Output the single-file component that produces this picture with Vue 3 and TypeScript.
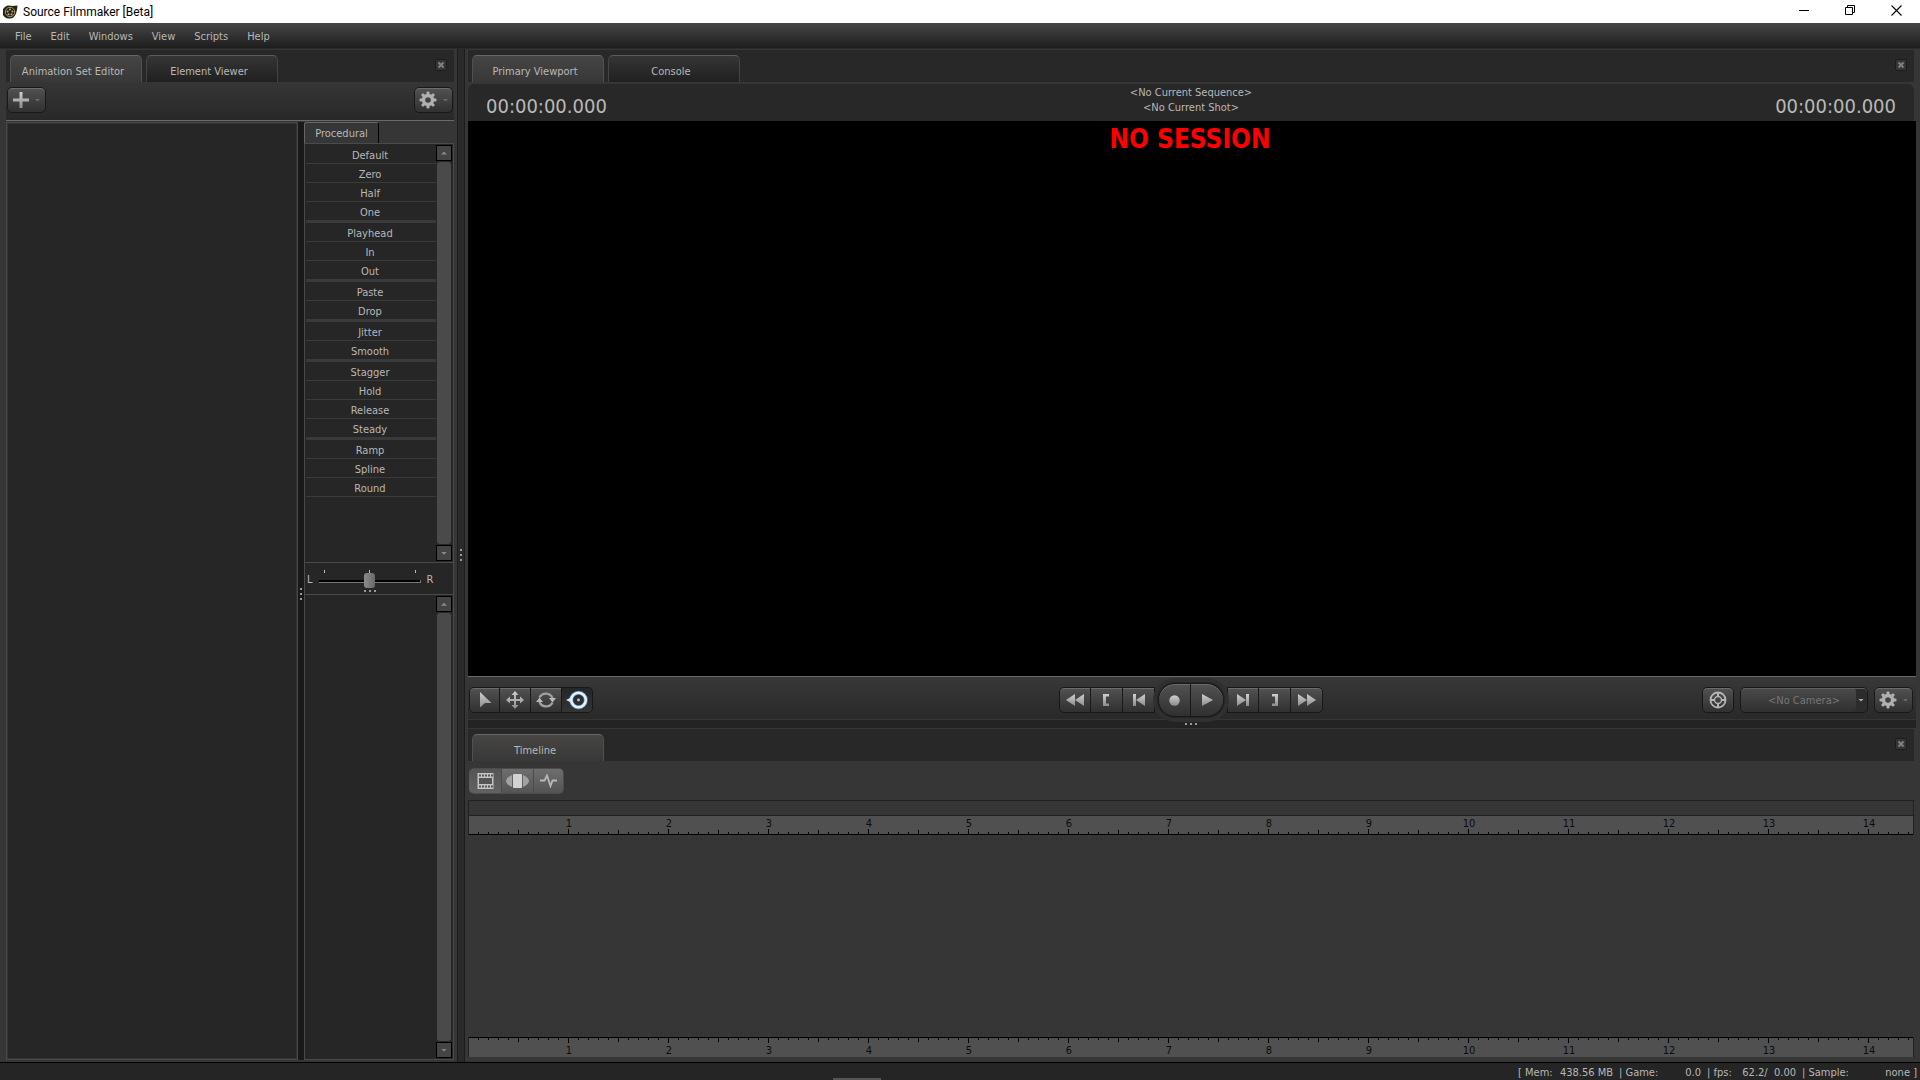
<script setup lang="ts">
import { ref } from 'vue'

const menus = ['File', 'Edit', 'Windows', 'View', 'Scripts', 'Help']
const presetGroups: string[][] = [
  ['Default', 'Zero', 'Half', 'One'],
  ['Playhead', 'In', 'Out'],
  ['Paste', 'Drop'],
  ['Jitter', 'Smooth'],
  ['Stagger', 'Hold', 'Release', 'Steady'],
  ['Ramp', 'Spline', 'Round'],
]
const stats = [
  { label: '[ Mem:', value: '438.56 MB', size: 'mem' },
  { label: '| Game:', value: '0.0', size: 'game' },
  { label: '| fps:', value: '62.2/  0.00', size: 'fps' },
  { label: '| Sample:', value: 'none ]', size: 'sample' },
]
const seconds = Array.from({ length: 14 }, (_, i) => i + 1)

const leftTab = ref('Animation Set Editor')
const viewTab = ref('Primary Viewport')
const balance = ref(50)
const camera = ref('none')

const gearTeeth = [0, 45, 90, 135, 180, 225, 270, 315]
</script>

<template>
  <div class="app">
    <svg class="defs" width="0" height="0" aria-hidden="true">
      <defs>
        <linearGradient id="metal" x1="0" y1="0" x2="0" y2="1">
          <stop offset="0" stop-color="#d0d0d0" />
          <stop offset="1" stop-color="#8c8c8c" />
        </linearGradient>
        <symbol id="gear" viewBox="0 0 18 18">
          <rect v-for="a in gearTeeth" :key="a" x="7.500" y="0.500" width="3" height="5" rx="1" fill="#b0b0b0" :transform="`rotate(${a} 9 9)`" />
          <circle cx="9" cy="9" r="4.500" fill="none" stroke="#b0b0b0" stroke-width="3.400" />
        </symbol>
        <symbol id="cross" viewBox="0 0 12 12">
          <path d="M3.500 3.500l5 5M8.500 3.500l-5 5" stroke="#808080" stroke-width="2" />
        </symbol>
      </defs>
    </svg>

    <header class="titlebar">
      <svg class="logo" width="15" height="14" viewBox="0 0 15 14" aria-hidden="true">
        <path d="M14.5 0.5C14 7 12.500 13.500 7 13.500A6.500 6.500 0 1 1 7.500 .8C10 1.200 12 .5 14.500 .5z" fill="#2a2416" />
        <circle cx="7" cy="7" r="4.700" fill="#211c12" stroke="#a3946a" stroke-width="1" />
        <circle cx="7" cy="4.500" r="1.100" fill="#b3a579" />
        <circle cx="4.600" cy="6.500" r="1.100" fill="#b3a579" />
        <circle cx="9.400" cy="6.500" r="1.100" fill="#b3a579" />
        <circle cx="5.600" cy="9.300" r="1.100" fill="#b3a579" />
        <circle cx="8.500" cy="9.300" r="1.100" fill="#b3a579" />
      </svg>
      <span class="title">Source Filmmaker [Beta]</span>
      <button class="win" aria-label="Minimize"><svg width="11" height="11" viewBox="0 0 11 11"><path d="M0 5.500h10" stroke="#000" /></svg></button>
      <button class="win" aria-label="Restore"><svg width="11" height="11" viewBox="0 0 11 11" fill="none" stroke="#000"><path d="M.5 2.500h7v7h-7zM2.500 2.500v-2h7v7h-2" /></svg></button>
      <button class="win" aria-label="Close"><svg width="11" height="11" viewBox="0 0 11 11"><path d="M.5.5l10 10M10.500.5l-10 10" stroke="#000" stroke-width="1.100" /></svg></button>
    </header>

    <nav class="menubar">
      <button v-for="m in menus" :key="m">{{ m }}</button>
    </nav>

    <main class="workspace">
      <section class="sidebar">
        <div class="tabs">
          <button v-for="t in ['Animation Set Editor', 'Element Viewer']" :key="t" class="tab" :class="{ active: t === leftTab }" @click="leftTab = t">{{ t }}</button>
          <button class="close" aria-label="Close panel"><svg width="12" height="12"><use href="#cross" /></svg></button>
        </div>
        <div class="side-tools">
          <button class="btn wide" aria-label="Add">
            <svg width="16" height="16" viewBox="0 0 16 16"><path d="M6.500 0h3v6.500H16v3H9.500V16h-3V9.500H0v-3h6.500z" fill="url(#metal)" /></svg>
            <i class="caret"></i>
          </button>
          <button class="btn wide" aria-label="Options"><svg width="18" height="18"><use href="#gear" /></svg><i class="caret"></i></button>
        </div>
        <div class="side-body">
          <div class="tree"></div>
          <div class="v-grip inner"><i></i><i></i><i></i></div>
          <div class="controls">
            <div class="subtabs"><button>Procedural</button></div>
            <div class="pane presets">
              <div class="preset-list">
                <div v-for="(group, gi) in presetGroups" :key="gi" class="group">
                  <button v-for="p in group" :key="p">{{ p }}</button>
                </div>
              </div>
              <div class="scroll">
                <button aria-label="Scroll up"><i class="up"></i></button>
                <div class="track"></div>
                <button aria-label="Scroll down"><i class="down"></i></button>
              </div>
            </div>
            <div class="balance">
              <label for="balance">L</label>
              <div class="slide">
                <div class="marks"><i></i><i></i><i></i></div>
                <input id="balance" v-model="balance" type="range" min="0" max="100" />
                <div class="dots"><i></i><i></i><i></i></div>
              </div>
              <span>R</span>
            </div>
            <div class="pane lower">
              <div class="preset-list"></div>
              <div class="scroll">
                <button aria-label="Scroll up"><i class="up"></i></button>
                <div class="track"></div>
                <button aria-label="Scroll down"><i class="down"></i></button>
              </div>
            </div>
          </div>
        </div>
      </section>

      <div class="v-grip outer"><i></i><i></i><i></i></div>

      <div class="stage">
        <section class="viewport">
          <div class="tabs">
            <button v-for="t in ['Primary Viewport', 'Console']" :key="t" class="tab" :class="{ active: t === viewTab }" @click="viewTab = t">{{ t }}</button>
            <button class="close" aria-label="Close panel"><svg width="12" height="12"><use href="#cross" /></svg></button>
          </div>
          <div class="timebar">
            <span class="time">00:00:00.000</span>
            <div class="current"><div>&lt;No Current Sequence&gt;</div><div>&lt;No Current Shot&gt;</div></div>
            <span class="time end">00:00:00.000</span>
          </div>
          <div class="screen"><strong>NO SESSION</strong></div>
          <div class="transport">
            <div class="tools">
              <button class="btn" aria-label="Select"><svg width="20" height="20" viewBox="0 0 20 20"><path d="M5 2L16.500 13H10L5 17.500z" fill="url(#metal)" /></svg></button>
              <button class="btn" aria-label="Move"><svg width="20" height="20" viewBox="0 0 20 20"><path d="M10 1l3.500 4H11v4h4V6.500l4 3.500-4 3.500V11h-4v4h2.500L10 19l-3.500-4H9v-4H5v2.500L1 10l4-3.500V9h4V5H6.500z" fill="url(#metal)" /></svg></button>
              <button class="btn" aria-label="Rotate"><svg width="20" height="20" viewBox="0 0 20 20"><path d="M3.500 7.500A7.200 7.200 0 0 1 16.500 8M16.500 12.500A7.200 7.200 0 0 1 3.500 12" fill="none" stroke="#a0a0a0" stroke-width="2.400" /><path d="M13 8h7l-3.500 4.500zM7 12H0l3.500-4.500z" fill="#b8b8b8" /></svg></button>
              <button class="btn on" aria-label="Full transform"><svg width="22" height="20" viewBox="0 0 22 20"><circle cx="12.500" cy="10" r="7.300" fill="none" stroke="#4f86b5" stroke-width="4" /><path d="M0 10l4-2v4z" fill="#cfe6fa" /><circle cx="12.500" cy="10" r="7.300" fill="none" stroke="#e4f2ff" stroke-width="2.600" /><circle cx="12.500" cy="10" r="1.400" fill="#a9d0f2" /></svg></button>
            </div>
            <div class="playback">
              <div class="side">
                <button class="btn" aria-label="Rewind"><svg width="18" height="12" viewBox="0 0 18 12"><path d="M0 6l9-6v12zM9 6l9-6v12z" fill="url(#metal)" /></svg></button>
                <button class="btn" aria-label="Go to in point"><svg width="7" height="12" viewBox="0 0 7 12"><path d="M0 0h6v2.500H3v7h3V12H0z" fill="url(#metal)" /></svg></button>
                <button class="btn" aria-label="Previous frame"><svg width="12" height="12" viewBox="0 0 12 12"><path d="M0 0h3v12H0zM3 6l9-6v12z" fill="url(#metal)" /></svg></button>
              </div>
              <div class="pill">
                <button class="btn" aria-label="Record"><svg width="11" height="11" viewBox="0 0 11 11"><circle cx="5.500" cy="5.500" r="5.200" fill="url(#metal)" /></svg></button>
                <button class="btn" aria-label="Play"><svg width="11" height="12" viewBox="0 0 11 12"><path d="M0 0l11 6-11 6z" fill="url(#metal)" /></svg></button>
              </div>
              <div class="side">
                <button class="btn" aria-label="Next frame"><svg width="12" height="12" viewBox="0 0 12 12"><path d="M9 0h3v12H9zM9 6L0 0v12z" fill="url(#metal)" /></svg></button>
                <button class="btn" aria-label="Go to out point"><svg width="7" height="12" viewBox="0 0 7 12"><path d="M7 0H1v2.500h3v7H1V12h6z" fill="url(#metal)" /></svg></button>
                <button class="btn" aria-label="Fast forward"><svg width="18" height="12" viewBox="0 0 18 12"><path d="M18 6L9 0v12zM9 6L0 0v12z" fill="url(#metal)" /></svg></button>
              </div>
            </div>
            <div class="camera">
              <button class="btn" aria-label="Work camera"><svg width="18" height="18" viewBox="0 0 18 18" fill="none" stroke="#b4b4b4"><circle cx="9" cy="9" r="7.500" stroke-width="1.800" /><circle cx="9" cy="9" r="3.500" stroke-width="1.400" /><path d="M9 1v5M9 12v5M1 9h5M12 9h5" stroke-width="2" /></svg></button>
              <div class="picker">
                <select v-model="camera" aria-label="Camera"><option value="none">&lt;No Camera&gt;</option></select>
                <i class="caret bright"></i>
              </div>
              <button class="btn wide" aria-label="Viewport options"><svg width="18" height="18"><use href="#gear" /></svg><i class="caret"></i></button>
            </div>
          </div>
        </section>

        <div class="h-grip"><i></i><i></i><i></i></div>

        <section class="timeline">
          <div class="tabs">
            <button class="tab active">Timeline</button>
            <button class="close" aria-label="Close panel"><svg width="12" height="12"><use href="#cross" /></svg></button>
          </div>
          <div class="modes">
            <button class="on" aria-label="Clip editor"><svg width="17" height="16" viewBox="0 0 17 16"><path d="M.5 0h16v16H.5z" fill="#c4c4c4" /><path d="M2 5h13v6H2z" fill="#555" /><path d="M2 2.500h14M2 13.500h14" stroke="#555" stroke-width="2" stroke-dasharray="2 1" /></svg></button>
            <button aria-label="Motion editor"><svg width="23" height="14" viewBox="0 0 23 14"><path d="M6 1v12C2 11 0 9 0 7s2-4 6-6zM17 1v12c4-2 6-4 6-6s-2-4-6-6z" fill="#a2a2a2" /><rect x="7" y="0" width="9" height="14" rx="1" fill="#d2d2d2" /></svg></button>
            <button aria-label="Graph editor"><svg width="17" height="14" viewBox="0 0 17 14"><path d="M0 6.500h4.500L7 1.500l3.500 10.500 2-5.500H17" fill="none" stroke="#b8b8b8" stroke-width="1.800" /></svg></button>
          </div>
          <div class="overview"></div>
          <div class="ruler top"><span v-for="s in seconds" :key="s">{{ s }}</span></div>
          <div class="lanes"></div>
          <div class="ruler bottom"><span v-for="s in seconds" :key="s">{{ s }}</span></div>
        </section>
      </div>
    </main>

    <footer class="status">
      <div v-for="s in stats" :key="s.label" class="stat" :class="s.size"><span>{{ s.label }}</span><span>{{ s.value }}</span></div>
      <i class="edge"></i>
    </footer>
  </div>
</template>

<style>
body {
  background: #363636;
}
</style>

<style scoped>
.app,
.app * {
  box-sizing: border-box;
}
.app {
  display: flex;
  flex-direction: column;
  height: 100vh;
  min-height: 800px;
  overflow: hidden;
  background: #363636;
  color: #b8b8b8;
  font: 11px/15px "DejaVu Sans Condensed", "DejaVu Sans", sans-serif;
}
.defs {
  position: absolute;
}
button,
select {
  margin: 0;
  padding: 0;
  border: 0;
  background: none;
  color: inherit;
  font: inherit;
}
svg {
  display: block;
  flex: none;
}

.titlebar {
  display: flex;
  flex: none;
  align-items: center;
  height: 23px;
  padding: 0 1px 0 3px;
  background: #fff;
  color: #000;
  font: 12px/22px Roboto, sans-serif;
}
.title {
  flex: 1;
  padding-left: 5px;
}
.win {
  display: flex;
  align-items: center;
  justify-content: center;
  width: 46px;
  height: 21px;
  align-self: flex-start;
}
.menubar {
  display: flex;
  flex: none;
  gap: 1px;
  height: 26px;
  padding: 2px 6px 0;
  background: linear-gradient(#464646, #1d1d1d);
  border-bottom: 1px solid #2a2a2a;
}
.menubar button {
  padding: 0 9px;
}

.workspace {
  display: flex;
  flex: 1;
  min-height: 0;
  border-bottom: 1px solid #000;
}
.sidebar {
  display: flex;
  flex: none;
  flex-direction: column;
  width: 454px;
  padding: 1px 0 2px 6px;
}
.tabs {
  display: flex;
  flex: none;
  align-items: flex-end;
  gap: 4px;
  height: 32px;
  padding-left: 4px;
  background: #282828;
}
.tab {
  width: 132px;
  height: 27px;
  padding: 4px 6px 0 0;
  border: 1px solid #444;
  border-top: 1px solid #5c5c5c;
  border-bottom: 0;
  border-radius: 5px 5px 0 0;
  background: linear-gradient(#353535, #202020);
}
.tab.active {
  border-color: #666 #505050;
  background: linear-gradient(#464543, #383838);
}
.close {
  align-self: flex-start;
  width: 12px;
  height: 12px;
  margin: 9px 7px 0 auto;
  border-radius: 2px;
  background: #353535;
  box-shadow: inset 0 0 0 1px #1c1c1c;
}

.side-tools {
  display: flex;
  flex: none;
  justify-content: space-between;
  height: 39px;
  padding: 5px 1px 0;
  border-bottom: 1px solid #6a6a6a;
  background: linear-gradient(#363636, #282828);
}
.btn {
  display: flex;
  align-items: center;
  justify-content: center;
  width: 32px;
  height: 26px;
  border: 1px solid #181818;
  border-radius: 5px;
  background: linear-gradient(#525252, #303030);
  box-shadow: inset 0 1px #6c6c6c;
}
.btn.wide {
  width: 39px;
  gap: 6px;
}
.caret {
  width: 6px;
  height: 3px;
  background: #6b6b6b;
  clip-path: polygon(0 0, 100% 0, 50% 100%);
}
.caret.bright {
  background: #b0b0b0;
}

.side-body {
  display: flex;
  flex: 1;
  min-height: 0;
  padding-top: 1px;
}
.tree {
  flex: 1;
  border: 1px solid #484848;
  background: #262626;
  box-shadow: inset 0 0 0 1px #343434;
}
.v-grip {
  display: flex;
  flex: none;
  flex-direction: column;
  align-items: center;
  justify-content: center;
  gap: 3px;
}
.v-grip i,
.h-grip i,
.dots i {
  width: 2px;
  height: 2px;
  background: #999;
}
.v-grip.inner {
  width: 6px;
  padding-top: 6px;
  background: #191919;
}
.v-grip.outer {
  width: 14px;
  padding-bottom: 2px;
  border: solid #363636;
  border-width: 0 3px;
  background: #2a2a2a;
  box-shadow: inset 1px 0 #1c1c1c, inset -1px 0 #1c1c1c;
}
.controls {
  display: flex;
  flex: none;
  flex-direction: column;
  width: 150px;
}
.subtabs {
  display: flex;
  flex: none;
  height: 21px;
}
.subtabs button {
  width: 75px;
  border: 1px solid #666;
  border-right: 1px solid #000;
  border-bottom: 0;
  border-radius: 3px 3px 0 0;
}
.pane {
  display: flex;
  border: 1px solid #4a4a4a;
  background: #262626;
  padding: 1px;
}
.presets {
  flex: 420 1 0;
}
.lower {
  flex: 466 1 0;
}
.preset-list {
  flex: 1;
}
.group {
  display: flex;
  flex-direction: column;
  border-bottom: 2px solid #3a3a3a;
}
.group:last-child {
  border-bottom: 0;
}
.group button {
  height: 19px;
  padding: 2px 2px 0 0;
  border-bottom: 1px solid #3a3a3a;
}
.scroll {
  display: flex;
  flex: none;
  flex-direction: column;
  width: 16px;
}
.scroll button {
  display: flex;
  align-items: center;
  justify-content: center;
  height: 16px;
  border: 1px solid #000;
  background: #444;
}
.track {
  flex: 1;
  margin: 1px;
  border-radius: 3px;
  background: #4a4a4a;
}
.up,
.down {
  width: 6px;
  height: 3px;
  background: #888;
  clip-path: polygon(50% 0, 100% 100%, 0 100%);
}
.down {
  clip-path: polygon(0 0, 100% 0, 50% 100%);
}
.balance {
  display: flex;
  flex: none;
  align-items: center;
  gap: 6px;
  height: 31px;
  padding: 2px 0 0 2px;
  border-right: 1px solid #4a4a4a;
  border-left: 1px solid #4a4a4a;
  background: #262626;
}
.slide {
  display: flex;
  flex-direction: column;
  align-items: center;
  width: 102px;
  padding-top: 3px;
}
.marks {
  display: flex;
  justify-content: space-between;
  align-self: stretch;
  padding: 0 5px;
}
.marks i {
  width: 1px;
  height: 3px;
  background: #bbb;
}
.slide input {
  width: 102px;
  height: 17px;
  margin: 0;
  appearance: none;
  background: transparent;
}
.slide input::-webkit-slider-runnable-track {
  height: 3px;
  border-bottom: 1px solid #777;
  border-right: 1px solid #777;
  background: #000;
}
.slide input::-webkit-slider-thumb {
  appearance: none;
  width: 11px;
  height: 15px;
  margin-top: -7px;
  border-radius: 3px;
  background: linear-gradient(90deg, #8c8c8c, #686868);
}
.dots,
.h-grip {
  display: flex;
  justify-content: center;
  gap: 3px;
}

.stage {
  display: flex;
  flex: 1;
  flex-direction: column;
  min-width: 0;
  padding: 1px 4px 0 0;
}
.viewport {
  display: flex;
  flex: 1;
  flex-direction: column;
  min-height: 0;
}
.stage .tabs {
  margin-right: 2px;
}
.timebar {
  display: grid;
  flex: none;
  grid-template-columns: 1fr auto 1fr;
  height: 37px;
  margin: 2px 2px 0 0;
  padding: 0 18px;
  border-radius: 6px 6px 0 0;
  background: #282828;
}
.time {
  padding-top: 10px;
  font-size: 20px;
  line-height: 25px;
}
.time.end {
  text-align: right;
}
.current {
  padding-top: 1px;
  text-align: center;
}
.screen {
  flex: 1;
  min-height: 0;
  padding: 1px 4px 0 0;
  background: #000;
  color: #f00;
  text-align: center;
}
.screen strong {
  font-size: 26px;
  line-height: 34px;
}
.transport {
  display: grid;
  flex: none;
  grid-template-columns: 1fr auto 1fr;
  align-items: center;
  height: 43px;
  padding: 4px 3px 0 1px;
  border-top: 1px solid #6a6a6a;
  background: linear-gradient(#383838, #292929);
}
.tools,
.playback,
.side,
.pill,
.camera,
.modes {
  display: flex;
  align-items: center;
}
.tools .btn,
.side .btn {
  border-radius: 0;
}
.tools .btn + .btn,
.side .btn + .btn,
.pill .btn + .btn {
  border-left: 0;
}
.tools .btn {
  width: 31px;
}
.tools .btn:first-child,
.side:first-child .btn:first-child {
  border-radius: 5px 0 0 5px;
}
.tools .btn:last-child,
.side:last-child .btn:last-child {
  border-radius: 0 5px 5px 0;
}
.tools .btn.on {
  background: linear-gradient(#262626, #343434);
  box-shadow: none;
}
.playback {
  gap: 3px;
}
.pill {
  z-index: 1;
  border-radius: 17px;
  box-shadow: 0 0 0 1px #242424, 0 0 0 5px #303030;
}
.pill .btn {
  width: 33px;
  height: 34px;
  border-radius: 17px 0 0 17px;
}
.pill .btn:last-child {
  border-radius: 0 17px 17px 0;
}
.camera {
  justify-content: flex-end;
  gap: 6px;
}
.picker {
  display: flex;
  align-items: center;
  width: 128px;
  height: 26px;
  border: 1px solid #181818;
  border-radius: 5px;
  background: linear-gradient(#4a4a4a, #303030);
  box-shadow: inset 0 1px #606060, inset -11px 0 #2c2c2c;
}
.picker select {
  flex: 1;
  height: 24px;
  padding-left: 9px;
  appearance: none;
  color: #767676;
  text-align: center;
  text-align-last: center;
}
.picker .caret {
  margin-right: 3px;
}

.h-grip {
  flex: none;
  align-items: center;
  height: 10px;
  padding-right: 2px;
  border-top: 1px solid #363636;
  border-bottom: 1px solid #363636;
  background: #232323;
}
.timeline {
  display: flex;
  flex: 0 0 333px;
  flex-direction: column;
  padding-bottom: 5px;
}
.modes {
  flex: none;
  height: 39px;
  padding: 0 1px;
}
.modes button {
  display: flex;
  align-items: center;
  justify-content: center;
  width: 32px;
  height: 26px;
  border: 1px solid #4c4c4c;
  border-left-width: 0;
  background: linear-gradient(#6e6e6e, #545454);
}
.modes button.on {
  background: linear-gradient(#555, #626262);
}
.modes button:first-child {
  width: 33px;
  border-radius: 5px 0 0 5px;
}
.modes button:last-child {
  width: 30px;
  border-radius: 0 5px 5px 0;
}
.overview {
  flex: none;
  height: 16px;
  margin-right: 2px;
  border: 1px solid #222;
}
.ruler {
  --major: linear-gradient(90deg, #000 1px, transparent 1px);
  display: flex;
  flex: none;
  height: 19px;
  margin-right: 2px;
  padding-left: 50px;
  overflow: hidden;
  border: solid #222;
  border-width: 0 1px;
  background-color: #505050;
  background-image: linear-gradient(#000, #000), var(--major), var(--major), var(--major);
  background-origin: border-box;
  background-repeat: repeat-x;
  background-size: 100% 1px, 100px 6px, 50px 5px, 10px 3px;
  color: #0c0c0c;
}
.ruler.top {
  background-position: 0 100%;
}
.ruler.bottom {
  height: 20px;
  padding-top: 6px;
}
.ruler span {
  flex: none;
  width: 100px;
  text-align: center;
}
.lanes {
  flex: 1;
}

.status {
  position: relative;
  display: flex;
  flex: none;
  justify-content: flex-end;
  gap: 6px;
  height: 17px;
  padding: 2px 3px 0;
  background: #252525;
}
.stat {
  display: flex;
  justify-content: space-between;
  white-space: pre;
}
.mem {
  width: 95px;
}
.game {
  width: 82px;
}
.fps {
  width: 89px;
}
.sample {
  width: 115px;
}
.edge {
  position: absolute;
  bottom: 0;
  left: 833px;
  width: 48px;
  height: 2px;
  background: #555;
}
</style>
